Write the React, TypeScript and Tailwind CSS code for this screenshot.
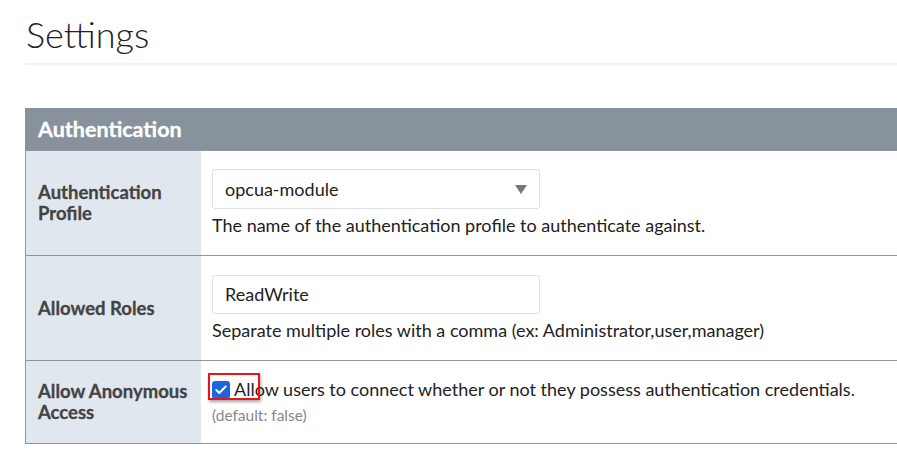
import { Check } from "lucide-react";

const font = { fontFamily: "Lato, 'Noto Sans', sans-serif" };

function Row({ label, children, last }: { label: React.ReactNode; children: React.ReactNode; last?: boolean }) {
  return (
    <div className={`flex border-t border-[#8c959e] ${last ? "border-b" : ""}`}>
      <div className="w-[175px] shrink-0 bg-[#e1e7ee] px-3 flex items-center">
        <div className="text-[18.5px] font-bold leading-[21px] text-[#444] [-webkit-text-stroke:0.3px_#444]">{label}</div>
      </div>
      <div className="flex-1 px-[11px] flex flex-col">{children}</div>
    </div>
  );
}

export default function App() {
  return (
    <div className="w-[897px] h-[459px] bg-white overflow-hidden" style={font}>
      <div className="pl-[25px]">
        <h1 className="text-[36px] font-light text-[#222] leading-none pt-[16px] pl-[1px] pb-[11px]">Settings</h1>
        <div className="h-[2px] bg-[#eef2f6]" />
        <div className="mt-[43px] border-l border-[#8c959e] w-[900px]">
          <div className="h-[42px] bg-[#87929c] flex items-center px-3">
            <span className="text-white font-bold text-[21.5px] [-webkit-text-stroke:0.3px_white]">Authentication</span>
          </div>
          <Row label={<>Authentication<br />Profile</>}>
            <div className="h-[104px] flex flex-col pt-[18px]">
              <div className="w-[328px] h-[40px] border border-[#dde2e8] rounded-[3px] flex items-center justify-between pl-[12px] pr-[12px]">
                <span className="text-[18px] text-[#222]">opcua-module</span>
                <svg width="12" height="9" viewBox="0 0 12 9"><path d="M0 0 H12 L6 9 Z" fill="#777" /></svg>
              </div>
              <div className="mt-[3px] text-[18px] text-[#222]">The name of the authentication profile to authenticate against.</div>
            </div>
          </Row>
          <Row label="Allowed Roles">
            <div className="h-[104px] flex flex-col pt-[19px]">
              <div className="w-[328px] h-[39px] border border-[#dde2e8] rounded-[3px] flex items-center pl-[12px]">
                <span className="text-[18px] text-[#222]">ReadWrite</span>
              </div>
              <div className="mt-[3px] text-[18px] text-[#222]">Separate multiple roles with a comma (ex: Administrator,user,manager)</div>
            </div>
          </Row>
          <Row label={<>Allow Anonymous<br />Access</>} last>
            <div className="h-[82px] flex flex-col justify-center">
              <div className="flex items-center relative">
                <span className="w-[18px] h-[18px] rounded-[3px] bg-[#1a66e0] flex items-center justify-center">
                  <Check size={14} strokeWidth={3.5} color="white" />
                </span>
                <span className="ml-[4px] text-[18px] text-[#222]">Allow users to connect whether or not they possess authentication credentials.</span>
                <span className="absolute left-[-4px] top-[-3px] w-[52px] h-[27px] border-2 border-[#e8141b] shadow-[1px_2px_3px_rgba(0,0,0,0.35)]" />
              </div>
              <div className="text-[15.5px] text-[#888] mt-[1px]">(default: false)</div>
            </div>
          </Row>
        </div>
      </div>
    </div>
  );
}
